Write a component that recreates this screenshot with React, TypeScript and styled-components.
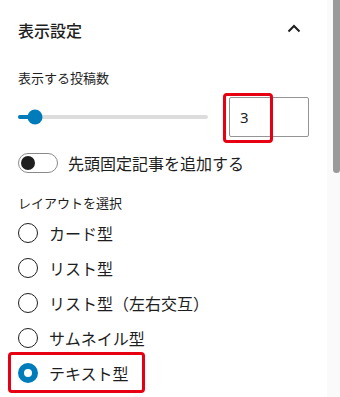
import React, { useState } from 'react';
import styled, { createGlobalStyle } from 'styled-components';

const GlobalStyle = createGlobalStyle`
  html, body {
    margin: 0;
    padding: 0;
    background: #fff;
  }
  body {
    font-family: "Noto Sans CJK JP", "Noto Sans", sans-serif;
    color: #1e1e1e;
  }
`;

const layouts = ['カード型', 'リスト型', 'リスト型（左右交互）', 'サムネイル型', 'テキスト型'];

export default function App() {
  const [count, setCount] = useState(3);
  const [sticky, setSticky] = useState(false);
  const [layout, setLayout] = useState('テキスト型');
  const min = 0;
  const max = 50;
  const pct = ((count - min) / (max - min)) * 100;

  return (
    <>
      <GlobalStyle />
      <Page>
        <Panel>
          <Header>
            <Title>表示設定</Title>
            <Chevron width="24" height="24" viewBox="0 0 24 24">
              <path d="M6.5 14.5 12 9l5.5 5.5" fill="none" stroke="#1e1e1e" strokeWidth="2" />
            </Chevron>
          </Header>

          <Label>表示する投稿数</Label>
          <RangeRow>
            <Track>
              <Fill style={{ width: `calc(${pct}% + 6px)` }} />
              <Thumb style={{ left: `calc(${pct}% + 6px)` }} />
            </Track>
            <NumberWrap>
              <NumberInput
                type="number"
                value={count}
                onChange={(e) => setCount(Number(e.target.value) || 1)}
              />
              <Highlight $left={-6} $top={-4} $width={50} $height={50} />
            </NumberWrap>
          </RangeRow>

          <ToggleRow onClick={() => setSticky(!sticky)}>
            <Toggle $on={sticky}>
              <Knob $on={sticky} />
            </Toggle>
            <ToggleText>先頭固定記事を追加する</ToggleText>
          </ToggleRow>

          <Label $gap={21}>レイアウトを選択</Label>
          <RadioList>
            {layouts.map((l) => (
              <RadioRow key={l} onClick={() => setLayout(l)}>
                <Radio $checked={layout === l} />
                <RadioText>{l}</RadioText>
                {l === 'テキスト型' && <Highlight $left={-10} $top={-9} $width={137} $height={41} />}
              </RadioRow>
            ))}
          </RadioList>
        </Panel>
        <ScrollTrack>
          <ScrollThumb />
        </ScrollTrack>
      </Page>
    </>
  );
}

const Page = styled.div`
  position: relative;
  width: 340px;
  height: 397px;
  overflow: hidden;
`;

const Panel = styled.div`
  width: 291px;
  padding: 0 0 0 18px;
`;

const Header = styled.div`
  height: 60px;
  display: flex;
  align-items: center;
  justify-content: space-between;
`;

const Title = styled.h2`
  margin: 0;
  font-size: 16px;
  font-weight: 500;
  line-height: 20px;
`;

const Chevron = styled.svg`
  margin-right: 3px;
  margin-top: -3px;
`;

const Label = styled.div<{ $gap?: number }>`
  margin-top: ${({ $gap }) => $gap ?? 9}px;
  font-size: 13px;
  font-weight: 400;
  line-height: 18px;
`;

const RangeRow = styled.div`
  margin-top: 10px;
  height: 40px;
  display: flex;
  align-items: center;
  gap: 21px;
`;

const Track = styled.div`
  position: relative;
  flex: 1;
  height: 4px;
  border-radius: 2px;
  background: #ddd;
`;

const Fill = styled.div`
  height: 100%;
  border-radius: 2px;
  background: #007cba;
`;

const Thumb = styled.div`
  position: absolute;
  top: 50%;
  width: 15px;
  height: 15px;
  border-radius: 50%;
  background: #007cba;
  transform: translate(-50%, -50%);
`;

const NumberWrap = styled.div`
  position: relative;
  width: 80px;
  height: 40px;
`;

const NumberInput = styled.input`
  box-sizing: border-box;
  width: 100%;
  height: 100%;
  padding: 0 0 0 10px;
  border: 1px solid #949494;
  border-radius: 2px;
  font-family: "Noto Sans", sans-serif;
  font-size: 15px;
  color: #1e1e1e;
  outline: none;
  -moz-appearance: textfield;
  &::-webkit-inner-spin-button,
  &::-webkit-outer-spin-button {
    -webkit-appearance: none;
    margin: 0;
  }
`;

const Highlight = styled.div<{ $left: number; $top: number; $width: number; $height: number }>`
  position: absolute;
  left: ${({ $left }) => $left}px;
  top: ${({ $top }) => $top}px;
  width: ${({ $width }) => $width}px;
  height: ${({ $height }) => $height}px;
  box-sizing: border-box;
  border: 3px solid #e60012;
  border-radius: 4px;
  pointer-events: none;
`;

const ToggleRow = styled.div`
  margin-top: 16px;
  display: flex;
  align-items: center;
  gap: 10px;
  cursor: pointer;
`;

const Toggle = styled.div<{ $on: boolean }>`
  box-sizing: border-box;
  width: 40px;
  height: 20px;
  border: 1px solid ${({ $on }) => ($on ? '#007cba' : '#8a8a8a')};
  border-radius: 10px;
  background: ${({ $on }) => ($on ? '#007cba' : '#fff')};
  display: flex;
  align-items: center;
  padding: 0 2px;
  justify-content: ${({ $on }) => ($on ? 'flex-end' : 'flex-start')};
`;

const Knob = styled.div<{ $on: boolean }>`
  width: 14px;
  height: 14px;
  border-radius: 50%;
  background: ${({ $on }) => ($on ? '#fff' : '#1e1e1e')};
`;

const ToggleText = styled.span`
  font-size: 16px;
  line-height: 20px;
`;

const RadioList = styled.div`
  margin-top: 9px;
  display: flex;
  flex-direction: column;
  gap: 11px;
`;

const RadioRow = styled.div`
  position: relative;
  height: 24px;
  display: flex;
  align-items: center;
  gap: 11px;
  cursor: pointer;
`;

const Radio = styled.span<{ $checked: boolean }>`
  box-sizing: border-box;
  width: 20px;
  height: 20px;
  border-radius: 50%;
  border: ${({ $checked }) => ($checked ? '6px solid #007cba' : '1.5px solid #1e1e1e')};
  background: #fff;
`;

const RadioText = styled.span`
  font-size: 16px;
  line-height: 20px;
`;

const ScrollTrack = styled.div`
  position: absolute;
  top: 0;
  right: 0;
  width: 13px;
  height: 100%;
  background: #fafafa;
  display: flex;
  justify-content: flex-end;
`;

const ScrollThumb = styled.div`
  width: 7px;
  height: 173px;
  background: #9a9a9a;
  border-radius: 0 0 4px 4px;
`;
